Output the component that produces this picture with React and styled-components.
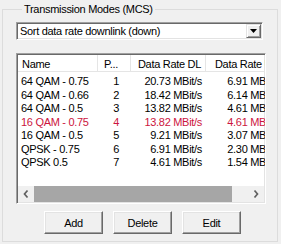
import React from "react";
import styled, { createGlobalStyle } from "styled-components";

const rows = [
  { name: "64 QAM - 0.75", p: 1, dl: "20.73 MBit/s", ul: "6.91 MBit/s" },
  { name: "64 QAM - 0.66", p: 2, dl: "18.42 MBit/s", ul: "6.14 MBit/s" },
  { name: "64 QAM - 0.5", p: 3, dl: "13.82 MBit/s", ul: "4.61 MBit/s" },
  { name: "16 QAM - 0.75", p: 4, dl: "13.82 MBit/s", ul: "4.61 MBit/s", hot: true },
  { name: "16 QAM - 0.5", p: 5, dl: "9.21 MBit/s", ul: "3.07 MBit/s" },
  { name: "QPSK - 0.75", p: 6, dl: "6.91 MBit/s", ul: "2.30 MBit/s" },
  { name: "QPSK 0.5", p: 7, dl: "4.61 MBit/s", ul: "1.54 MBit/s" },
];

// Name, P..., Data Rate DL, Data Rate UL
const cols = [
  { w: 80, title: "Name" },
  { w: 33, title: "P...", right: true, pad: 12 },
  { w: 75, title: "Data Rate DL", right: true, pad: 4 },
  { w: 78, title: "Data Rate UL", right: true, pad: 5 },
];

const App = () => {
  return (
    <>
      <GlobalStyle />
      <Window>
        <GroupBox>
          <Legend>Transmission Modes (MCS)</Legend>

          <Combo>
            <ComboText>Sort data rate downlink (down)</ComboText>
            <DropButton>
              <svg width="7" height="4" viewBox="0 0 7 4">
                <polygon points="0,0 7,0 3.5,4" fill="#000" />
              </svg>
            </DropButton>
          </Combo>

          <ListView>
            <Header>
              {cols.map((c) => (
                <HeadCell key={c.title} $w={c.w} $right={c.right} $pad={c.pad}>
                  {c.title}
                </HeadCell>
              ))}
            </Header>

            <Body>
              {rows.map((r) => (
                <Row key={r.name} $hot={r.hot}>
                  <Cell $w={cols[0].w}>{r.name}</Cell>
                  <Cell $w={cols[1].w} $right $pad={cols[1].pad}>{r.p}</Cell>
                  <Cell $w={cols[2].w} $right $pad={cols[2].pad}>{r.dl}</Cell>
                  <Cell $w={cols[3].w} $right $pad={cols[3].pad}>{r.ul}</Cell>
                </Row>
              ))}
            </Body>

            <HScroll>
              <ArrowBtn>
                <svg width="16" height="16" viewBox="0 0 16 16">
                  <polyline points="9.5,4.5 6.5,8 9.5,11.5" fill="none" stroke="#606060" strokeWidth="1.7" />
                </svg>
              </ArrowBtn>
              <Track>
                <Thumb />
              </Track>
              <ArrowBtn>
                <svg width="16" height="16" viewBox="0 0 16 16">
                  <polyline points="6.5,4.5 9.5,8 6.5,11.5" fill="none" stroke="#606060" strokeWidth="1.7" />
                </svg>
              </ArrowBtn>
            </HScroll>
          </ListView>

          <ButtonRow>
            <Button>Add</Button>
            <Button>Delete</Button>
            <Button>Edit</Button>
          </ButtonRow>
        </GroupBox>
      </Window>
    </>
  );
};

export default App;

const GlobalStyle = createGlobalStyle`
  html, body {
    margin: 0;
    padding: 0;
    background: #f0f0f0;
  }
  body {
    font-family: "Liberation Sans", Arial, sans-serif;
    font-size: 11px;
    letter-spacing: -0.3px;
    color: #000;
  }
`;

const Window = styled.div`
  width: 281px;
  height: 244px;
  box-sizing: border-box;
  padding: 3px 3px 0 2px;
  background: #f0f0f0;
`;

const GroupBox = styled.fieldset`
  margin: 0;
  min-width: 0;
  height: 239px;
  box-sizing: border-box;
  border: 1px solid #dcdcdc;
  padding: 6px 11px 0 13px;
  display: flex;
  flex-direction: column;
`;

const Legend = styled.legend`
  margin-left: 6px;
  padding: 0 2px;
  line-height: 13px;
`;

const Combo = styled.div`
  display: flex;
  align-items: center;
  height: 18px;
  margin-right: 3px;
  box-sizing: border-box;
  background: #fff;
  border: 1px solid;
  border-color: #a0a0a0 #fff #fff #a0a0a0;
  box-shadow: inset 1px 1px #696969, inset -1px -1px #e3e3e3;
`;

const ComboText = styled.div`
  flex: 1;
  padding-left: 3px;
  white-space: nowrap;
`;

const DropButton = styled.div`
  width: 15px;
  height: 14px;
  margin-right: 1px;
  box-sizing: border-box;
  display: flex;
  align-items: center;
  justify-content: center;
  background: #f0f0f0;
  border: 1px solid;
  border-color: #e3e3e3 #696969 #696969 #e3e3e3;
  box-shadow: inset 1px 1px #fff, inset -1px -1px #a0a0a0;
`;

const ListView = styled.div`
  margin-top: 13px;
  height: 151px;
  box-sizing: border-box;
  background: #fff;
  border: 1px solid;
  border-color: #a0a0a0 #fff #fff #a0a0a0;
  box-shadow: inset 1px 1px #696969, inset -1px -1px #e3e3e3;
  padding: 1px;
  display: flex;
  flex-direction: column;
  overflow: hidden;
`;

const Header = styled.div`
  display: flex;
  height: 17px;
  box-sizing: border-box;
  border-bottom: 1px solid #e5e5e5;
  flex-shrink: 0;
`;

const HeadCell = styled.div`
  flex: 0 0 ${(p) => p.$w}px;
  box-sizing: border-box;
  padding: ${(p) => (p.$right ? `2px ${p.$pad}px 0 0` : "2px 0 0 4px")};
  text-align: ${(p) => (p.$right ? "right" : "left")};
  border-right: 1px solid #e5e5e5;
  white-space: nowrap;
  overflow: hidden;
  line-height: 14px;
`;

const Body = styled.div`
  flex: 1;
  padding-top: 3px;
`;

const Row = styled.div`
  display: flex;
  height: 13.5px;
  line-height: 13.5px;
  color: ${(p) => (p.$hot ? "#cc1440" : "#000")};
`;

const Cell = styled.div`
  flex: 0 0 ${(p) => p.$w}px;
  box-sizing: border-box;
  white-space: nowrap;
  overflow: hidden;
  text-align: ${(p) => (p.$right ? "right" : "left")};
  padding: ${(p) => (p.$right ? `0 ${p.$pad}px 0 0` : "0 0 0 3px")};
`;

const HScroll = styled.div`
  display: flex;
  height: 16px;
  flex-shrink: 0;
  background: #f0f0f0;
`;

const ArrowBtn = styled.div`
  width: 16px;
  height: 16px;
  display: flex;
  align-items: center;
  justify-content: center;
`;

const Track = styled.div`
  flex: 1;
  display: flex;
`;

const Thumb = styled.div`
  width: 92.5%;
  background: #a6a6a6;
`;

const ButtonRow = styled.div`
  display: flex;
  justify-content: center;
  gap: 10px;
  margin-top: 7px;
  padding-left: 3px;
`;

const Button = styled.button`
  width: 59px;
  height: 23px;
  padding: 0;
  font: inherit;
  letter-spacing: inherit;
  color: #000;
  background: #f0f0f0;
  border: 1px solid;
  border-color: #fff #696969 #696969 #fff;
  box-shadow: inset -1px -1px #a0a0a0, inset 1px 1px #e3e3e3;
  border-radius: 0;
`;
